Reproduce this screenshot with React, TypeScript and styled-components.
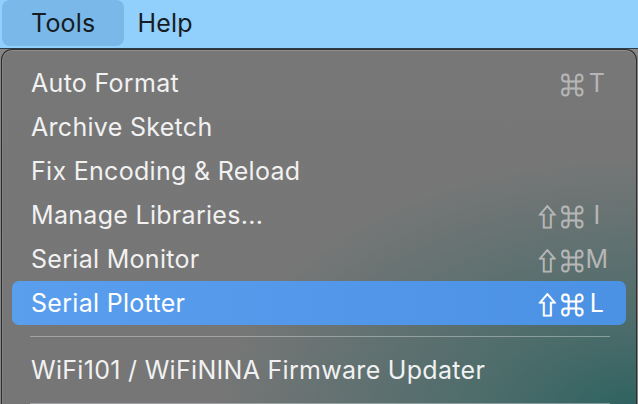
import React from "react";
import styled, { createGlobalStyle } from "styled-components";

const Global = createGlobalStyle`
  html, body { margin: 0; padding: 0; background: #7a7a7a; }
  body { font-family: "Inter", "Liberation Sans", sans-serif; -webkit-font-smoothing: antialiased; }
  #root { width: 638px; height: 404px; overflow: hidden; }
`;

const Screen = styled.div`
  width: 638px;
  height: 404px;
  display: flex;
  flex-direction: column;
  background: #858585;
  overflow: hidden;
`;

const MenuBar = styled.div`
  height: 48px;
  flex: none;
  display: flex;
  align-items: flex-start;
  padding-left: 2px;
  background: #91d0fd;
  border-bottom: 1px solid #2c3e4c;
`;

const MenuTitle = styled.div<{ $active?: boolean }>`
  height: 46px;
  display: flex;
  align-items: center;
  padding: 0 ${(p) => (p.$active ? "29px" : "13px")};
  border-radius: 8px;
  font-size: 25px;
  letter-spacing: 0.2px;
  color: #161c22;
  background: ${(p) => (p.$active ? "#79b8e8" : "transparent")};
`;

const Dropdown = styled.div`
  flex: 1;
  margin: 0 1px 0 1px;
  padding: 11px 10px 0 10px;
  border: 1px solid #2e2e2e;
  border-bottom: none;
  border-radius: 11px 11px 0 0;
  box-shadow: inset 0 1px 0 rgba(255, 255, 255, 0.18), inset 1px 0 0 rgba(255, 255, 255, 0.08);
  background:
    radial-gradient(ellipse 420px 260px at 100% 100%, #2c6260 0%, rgba(58, 104, 102, 0.7) 35%, rgba(110, 118, 118, 0) 100%),
    linear-gradient(180deg, #777777 0%, #767676 100%);
`;

const Item = styled.div<{ $selected?: boolean }>`
  height: 44px;
  display: flex;
  align-items: center;
  justify-content: space-between;
  padding: 0 17px 0 19px;
  border-radius: 7px;
  font-size: 25px;
  letter-spacing: 0.3px;
  color: ${(p) => (p.$selected ? "#ffffff" : "#f1f1f1")};
  background: ${(p) =>
    p.$selected ? "linear-gradient(90deg, #5a9eee 0%, #4b91e4 100%)" : "transparent"};
`;

const Shortcut = styled.span<{ $selected?: boolean }>`
  display: flex;
  align-items: center;
  color: ${(p) => (p.$selected ? "#ffffff" : "#b6b6b6")};
  font-size: 25px;
`;

const Mod = styled.span`
  font-family: "Noto Sans CJK JP", "DejaVu Sans", sans-serif;
  font-size: 24px;
  width: 25px;
  text-align: center;
  -webkit-text-stroke: 0.9px currentColor;
`;

const Key = styled.span`
  width: 24px;
  text-align: center;
`;

const Separator = styled.div`
  height: 1px;
  margin: 11px 16px 11px 18px;
  background: rgba(210, 220, 220, 0.45);
`;

type Entry = { label: string; mods?: string[]; key?: string; selected?: boolean };

const items: Entry[] = [
  { label: "Auto Format", mods: ["⌘"], key: "T" },
  { label: "Archive Sketch" },
  { label: "Fix Encoding & Reload" },
  { label: "Manage Libraries...", mods: ["⇧", "⌘"], key: "I" },
  { label: "Serial Monitor", mods: ["⇧", "⌘"], key: "M" },
  { label: "Serial Plotter", mods: ["⇧", "⌘"], key: "L", selected: true },
];

export default function App() {
  return (
    <>
      <Global />
      <Screen>
        <MenuBar>
          <MenuTitle $active>Tools</MenuTitle>
          <MenuTitle>Help</MenuTitle>
        </MenuBar>
        <Dropdown>
          {items.map((it) => (
            <Item key={it.label} $selected={it.selected}>
              <span>{it.label}</span>
              {it.key && (
                <Shortcut $selected={it.selected}>
                  {it.mods?.map((m, i) => (
                    <Mod key={i}>{m}</Mod>
                  ))}
                  <Key>{it.key}</Key>
                </Shortcut>
              )}
            </Item>
          ))}
          <Separator />
          <Item>
            <span>WiFi101 / WiFiNINA Firmware Updater</span>
          </Item>
          <Separator />
        </Dropdown>
      </Screen>
    </>
  );
}
